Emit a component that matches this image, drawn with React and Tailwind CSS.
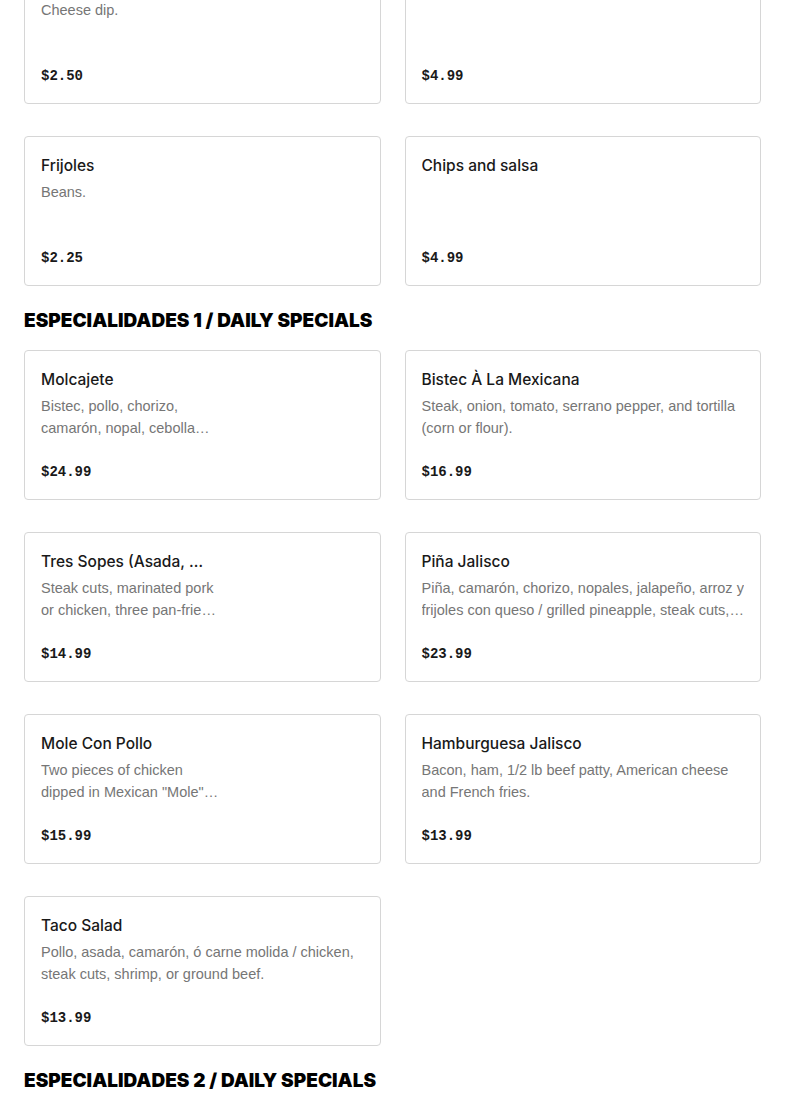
import React from "react";

const sections = [
  {
    title: null,
    items: [
      { name: "Queso", desc: "Cheese dip.", price: "$2.50" },
      { name: "Guacamole", desc: "", price: "$4.99" },
      { name: "Frijoles", desc: "Beans.", price: "$2.25" },
      { name: "Chips and salsa", desc: "", price: "$4.99" },
    ],
  },
  {
    title: "ESPECIALIDADES 1 / DAILY SPECIALS",
    items: [
      {
        name: "Molcajete",
        desc: "Bistec, pollo, chorizo, camarón, nopal, cebolla asada, queso fresco y salsa roja.",
        price: "$24.99",
        narrow: true,
      },
      {
        name: "Bistec À La Mexicana",
        desc: "Steak, onion, tomato, serrano pepper, and tortilla (corn or flour).",
        price: "$16.99",
      },
      {
        name: "Tres Sopes (Asada, Pastor o Pollo)",
        desc: "Steak cuts, marinated pork or chicken, three pan-fried sopes with beans, lettuce and cheese.",
        price: "$14.99",
        narrow: true,
      },
      {
        name: "Piña Jalisco",
        desc: "Piña, camarón, chorizo, nopales, jalapeño, arroz y frijoles con queso / grilled pineapple, steak cuts, shrimp, sausage and cactus.",
        price: "$23.99",
      },
      {
        name: "Mole Con Pollo",
        desc: 'Two pieces of chicken dipped in Mexican "Mole" sauce, served with rice and beans.',
        price: "$15.99",
        narrow: true,
      },
      {
        name: "Hamburguesa Jalisco",
        desc: "Bacon, ham, 1/2 lb beef patty, American cheese and French fries.",
        price: "$13.99",
      },
      {
        name: "Taco Salad",
        desc: "Pollo, asada, camarón, ó carne molida / chicken, steak cuts, shrimp, or ground beef.",
        price: "$13.99",
      },
    ],
  },
  { title: "ESPECIALIDADES 2 / DAILY SPECIALS", items: [] },
];

const sans = { fontFamily: '"Liberation Sans", Arial, sans-serif' };

function ItemCard({ item }) {
  return (
    <div className="h-[150px] rounded-[4px] border border-[#d6d6d6] bg-white px-4 pt-[17px] pb-[15px] flex flex-col">
      <div className={item.narrow ? "w-[180px]" : "w-full"}>
        <h3
          className={
            "text-[15.5px] leading-6 font-medium text-[#191919] truncate font-['Inter',sans-serif] " +
            (item.narrow ? "max-w-[166px]" : "")
          }
        >
          {item.name}
        </h3>
        <p className="mt-[3px] text-[14.5px] leading-[22px] text-[#767676] line-clamp-2">{item.desc}</p>
      </div>
      <div className="mt-auto text-[14px] leading-6 font-bold text-[#191919] font-['Liberation_Mono',monospace]">
        {item.price}
      </div>
    </div>
  );
}

export default function App() {
  return (
    <div className="h-[1107px] overflow-hidden bg-white" style={sans}>
      <div className="px-6 -mt-[46px]">
        {sections.map((s, i) => (
          <section key={i}>
            {s.title && (
              <h2 className="mt-6 mb-[18px] text-[19px] leading-[22px] font-black text-black font-['Inter',sans-serif]">
                {s.title}
              </h2>
            )}
            {s.items.length > 0 && (
              <div className="grid grid-cols-2 gap-x-6 gap-y-8">
                {s.items.map((it) => (
                  <ItemCard key={it.name} item={it} />
                ))}
              </div>
            )}
          </section>
        ))}
      </div>
    </div>
  );
}
